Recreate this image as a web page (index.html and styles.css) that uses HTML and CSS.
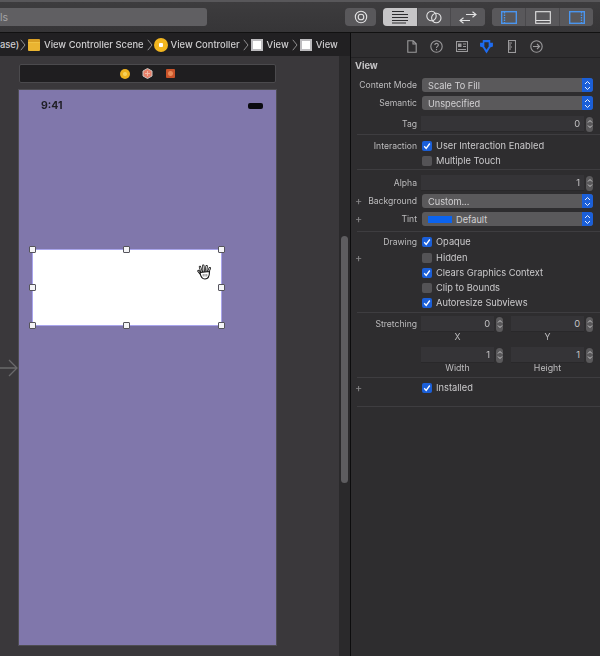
FILE: index.html
```html
<!DOCTYPE html>
<html lang="en">
<head>
<meta charset="utf-8">
<title>View inspector</title>
<link rel="stylesheet" href="styles.css">
</head>
<body>
<div class="app">
  <header class="toolbar">
    <div class="search"><span>ls</span></div>
    <div class="seg seg-one">
      <button class="seg-btn w31"><svg width="16" height="16" viewBox="0 0 16 16"><circle cx="8" cy="8" r="5.7" class="ic-w"/><circle cx="8" cy="8" r="2.8" class="ic-w"/></svg></button>
    </div>
    <div class="seg seg-two">
      <button class="seg-btn w35 on"><svg width="18" height="14" viewBox="0 0 18 14"><path d="M1 1.5h12M1 4.5h16M1 7.5h16M1 10.500h16M1 13h14" class="ic-d"/></svg></button>
      <button class="seg-btn w33"><svg width="16" height="14" viewBox="0 0 16 14"><circle cx="5.500" cy="6" r="4.700" class="ic-w"/><circle cx="10.300" cy="8" r="4.700" class="ic-w"/></svg></button>
      <button class="seg-btn w34"><svg width="18" height="13" viewBox="0 0 18 13"><path d="M7 3.500h10M13.500 .8l3.500 2.700-3.500 2.700M1 9.500h10M4.500 6.800L1 9.500l3.500 2.700" class="ic-w"/></svg></button>
    </div>
    <div class="seg seg-three">
      <button class="seg-btn w34"><svg width="16" height="13" viewBox="0 0 16 13"><rect x=".7" y=".7" width="14.600" height="11.600" class="ic-b"/><path d="M3.500 1v11" class="ic-b dash"/></svg></button>
      <button class="seg-btn w34"><svg width="16" height="13" viewBox="0 0 16 13"><rect x=".7" y=".7" width="14.600" height="11.600" class="ic-w"/><path d="M1 9.500h14" class="ic-w"/></svg></button>
      <button class="seg-btn w33"><svg width="16" height="13" viewBox="0 0 16 13"><rect x=".7" y=".7" width="14.600" height="11.600" class="ic-b"/><path d="M12.500 1v11" class="ic-b dash"/></svg></button>
    </div>
  </header>

  <div class="workspace">
    <section class="editor">
      <nav class="crumbs">
        <span class="crumb-cut">ase)</span>
        <svg class="chev" width="6" height="12" viewBox="0 0 6 12"><path d="M.8 .8L5 6 .8 11.200"/></svg>
        <span class="i-scene"></span>
        <span class="crumb">View Controller Scene</span>
        <svg class="chev" width="6" height="12" viewBox="0 0 6 12"><path d="M.8 .8L5 6 .8 11.200"/></svg>
        <span class="i-vc"></span>
        <span class="crumb c3">View Controller</span>
        <svg class="chev" width="6" height="12" viewBox="0 0 6 12"><path d="M.8 .8L5 6 .8 11.200"/></svg>
        <span class="i-view"></span>
        <span class="crumb">View</span>
        <svg class="chev" width="6" height="12" viewBox="0 0 6 12"><path d="M.8 .8L5 6 .8 11.200"/></svg>
        <span class="i-view"></span>
        <span class="crumb">View</span>
      </nav>
      <div class="stage">
        <div class="canvas">
          <svg class="entry" width="19" height="20" viewBox="0 0 19 20"><path d="M0 10h17M9 2l8 8-8 8"/></svg>
          <div class="dock">
            <span class="dk-vc"></span>
            <svg width="11" height="11" viewBox="0 0 11 11"><path d="M5.500 .5l4.500 2.500v5l-4.500 2.500L1 8V3z" fill="#e8806a" stroke="#c9c4c0"/><path d="M5.500 3v5M3 5.500h5" stroke="#f0b9a5"/></svg>
            <span class="dk-ex"></span>
          </div>
          <div class="phone">
            <div class="status"><span class="time">9:41</span><span class="batt"></span></div>
            <div class="subview">
              <i class="h tl"></i><i class="h tc"></i><i class="h tr"></i>
              <i class="h ml"></i><i class="h mr"></i>
              <i class="h bl"></i><i class="h bc"></i><i class="h br"></i>
              <svg class="hand" width="15" height="16" viewBox="0 0 15 16"><path d="M3.500 9.500L1.500 7M4.500 8L3 3M6.800 7.500L6.300 1.800M9 7.500l.6-5.200M11 8.500l1.800-4.300" class="hand-o"/><path d="M3.500 9.500L1.500 7M4.500 8L3 3M6.800 7.500L6.300 1.800M9 7.500l.6-5.200M11 8.500l1.800-4.300" class="hand-i"/><path d="M3 8.500C3.500 12 5 15 8 15s4.500-2.500 4.500-7.500z" fill="#fff" stroke="#111" stroke-width="1.100"/><path d="M6.200 10v2.500M8 10v2.500M9.800 10v2.500" stroke="#777" stroke-width=".9"/></svg>
            </div>
          </div>
        </div>
        <div class="track"><div class="thumb"></div></div>
      </div>
    </section>

    <aside class="inspector">
      <div class="tabs">
        <span class="tab"><svg width="10" height="13" viewBox="0 0 10 13"><path d="M.8 .8h5.400l3 3v8.400H.8zM6 1v3h3" class="ic-g"/></svg></span>
        <span class="tab"><svg width="13" height="13" viewBox="0 0 13 13"><circle cx="6.500" cy="6.500" r="5.700" class="ic-g"/><path d="M4.800 5c0-2.200 3.500-2.200 3.500-.1 0 1.500-1.800 1.500-1.800 3M6.500 9v1.200" class="ic-g"/></svg></span>
        <span class="tab"><svg width="12" height="11" viewBox="0 0 12 11"><rect x=".5" y=".5" width="11" height="10" class="ic-g"/><path d="M7 3h3M7 5.500h3M2 8.500h8" class="ic-g"/><rect x="2" y="2.500" width="3.500" height="3.500" fill="#9b9a9c"/></svg></span>
        <span class="tab"><svg width="15" height="15" viewBox="0 0 14 14"><path d="M3.500 1h7v2.500H13v3.500l-2.500 1-3.500 5.500-3.500-5.500L1 7V3.500h2.500z" fill="#1e6bf0"/><path d="M5 3h4v4l-2 3-2-3z" fill="#2e2d2f"/></svg></span>
        <span class="tab"><svg width="8" height="13" viewBox="0 0 8 13"><rect x=".5" y=".5" width="7" height="12" class="ic-g"/><path d="M1 3h3M1 5h2M1 7h3M1 9h2" class="ic-g"/></svg></span>
        <span class="tab"><svg width="13" height="13" viewBox="0 0 13 13"><circle cx="6.500" cy="6.500" r="5.700" class="ic-g"/><path d="M3 6.500h6.500M7 4l2.500 2.500L7 9" class="ic-g"/></svg></span>
      </div>

      <div class="sec s1">
        <h2 class="title">View</h2>
        <div class="row r18"><div class="lbl"><span>Content Mode</span></div><div class="popup"><span>Scale To Fill</span><b class="cap"><svg width="7" height="11" viewBox="0 0 7 11"><path d="M1 4l2.500-2.500L6 4M1 7l2.500 2.500L6 7"/></svg></b></div></div>
        <div class="row r18"><div class="lbl"><span>Semantic</span></div><div class="popup"><span>Unspecified</span><b class="cap"><svg width="7" height="11" viewBox="0 0 7 11"><path d="M1 4l2.500-2.500L6 4M1 7l2.500 2.500L6 7"/></svg></b></div></div>
        <div class="row r20"><div class="lbl"><span>Tag</span></div><div class="field full">0</div><div class="step"><svg width="6" height="10" viewBox="0 0 6 10"><path d="M1 3.500l2-2 2 2M1 6.500l2 2 2-2"/></svg></div></div>
      </div>

      <div class="sec s2">
        <div class="row r15"><div class="lbl"><span>Interaction</span></div><span class="cb on"><svg width="8" height="8" viewBox="0 0 8 8"><path d="M1.200 4.200l2 2.200L6.800 1.500"/></svg></span><span class="opt">User Interaction Enabled</span></div>
        <div class="row r15"><div class="lbl"></div><span class="cb"></span><span class="opt">Multiple Touch</span></div>
      </div>

      <div class="sec s3">
        <div class="row r18"><div class="lbl"><span>Alpha</span></div><div class="field full">1</div><div class="step"><svg width="6" height="10" viewBox="0 0 6 10"><path d="M1 3.500l2-2 2 2M1 6.500l2 2 2-2"/></svg></div></div>
        <div class="row r18"><div class="lbl"><span class="plus">+</span><span>Background</span></div><div class="popup"><span>Custom...</span><b class="cap"><svg width="7" height="11" viewBox="0 0 7 11"><path d="M1 4l2.500-2.500L6 4M1 7l2.500 2.500L6 7"/></svg></b></div></div>
        <div class="row r18"><div class="lbl"><span class="plus">+</span><span>Tint</span></div><div class="popup"><i class="swatch"></i><span>Default</span><b class="cap"><svg width="7" height="11" viewBox="0 0 7 11"><path d="M1 4l2.500-2.500L6 4M1 7l2.500 2.500L6 7"/></svg></b></div></div>
      </div>

      <div class="sec s4">
        <div class="row r15"><div class="lbl"><span>Drawing</span></div><span class="cb on"><svg width="8" height="8" viewBox="0 0 8 8"><path d="M1.200 4.200l2 2.200L6.800 1.500"/></svg></span><span class="opt">Opaque</span></div>
        <div class="row r15"><div class="lbl"><span class="plus">+</span></div><span class="cb"></span><span class="opt">Hidden</span></div>
        <div class="row r15"><div class="lbl"></div><span class="cb on"><svg width="8" height="8" viewBox="0 0 8 8"><path d="M1.200 4.200l2 2.200L6.800 1.500"/></svg></span><span class="opt">Clears Graphics Context</span></div>
        <div class="row r15"><div class="lbl"></div><span class="cb"></span><span class="opt">Clip to Bounds</span></div>
        <div class="row r15"><div class="lbl"></div><span class="cb on"><svg width="8" height="8" viewBox="0 0 8 8"><path d="M1.200 4.200l2 2.200L6.800 1.500"/></svg></span><span class="opt">Autoresize Subviews</span></div>
      </div>

      <div class="sec s5">
        <div class="row r16">
          <div class="lbl"><span>Stretching</span></div>
          <div class="field half">0</div><div class="step"><svg width="6" height="10" viewBox="0 0 6 10"><path d="M1 3.500l2-2 2 2M1 6.500l2 2 2-2"/></svg></div>
          <div class="field half gap">0</div><div class="step"><svg width="6" height="10" viewBox="0 0 6 10"><path d="M1 3.500l2-2 2 2M1 6.500l2 2 2-2"/></svg></div>
        </div>
        <div class="caps"><span>X</span><span>Y</span></div>
        <div class="row r16 mt5">
          <div class="lbl"></div>
          <div class="field half">1</div><div class="step"><svg width="6" height="10" viewBox="0 0 6 10"><path d="M1 3.500l2-2 2 2M1 6.500l2 2 2-2"/></svg></div>
          <div class="field half gap">1</div><div class="step"><svg width="6" height="10" viewBox="0 0 6 10"><path d="M1 3.500l2-2 2 2M1 6.500l2 2 2-2"/></svg></div>
        </div>
        <div class="caps"><span>Width</span><span>Height</span></div>
      </div>

      <div class="sec s6">
        <div class="row r15"><div class="lbl"><span class="plus">+</span></div><span class="cb on"><svg width="8" height="8" viewBox="0 0 8 8"><path d="M1.200 4.200l2 2.200L6.800 1.500"/></svg></span><span class="opt">Installed</span></div>
      </div>
    </aside>
  </div>
</div>
</body>
</html>
```

FILE: styles.css
```css
* { box-sizing: border-box; }
html, body { margin: 0; padding: 0; }
body { width: 600px; height: 656px; overflow: hidden; background: #2e2d2f; font-family: Inter, "Liberation Sans", sans-serif; font-size: 9.3px; color: #c4c3c5; }
.app { width: 600px; height: 656px; display: flex; flex-direction: column; filter: blur(.35px); }

/* toolbar */
.toolbar { height: 33px; flex: none; display: flex; align-items: center; padding: 0 7px 0 0; background: linear-gradient(#3d3c3e, #363537); border-top: 2px solid #58575a; border-bottom: 1px solid #111; }
.search { width: 207px; height: 18px; background: #605f62; border-radius: 0 3px 3px 0; display: flex; align-items: center; font-size: 10.5px; color: #a5a4a6; }
.seg { display: flex; height: 18px; border-radius: 4px; overflow: hidden; background: #59585b; }
.seg-one { margin-left: 138px; }
.seg-two { margin-left: 7px; }
.seg-three { margin-left: 7px; }
.seg-btn { border: 0; padding: 0; height: 18px; background: #59585b; display: flex; align-items: center; justify-content: center; border-right: 1px solid #4a494c; }
.seg-btn:last-child { border-right: 0; }
.seg-btn.on { background: #c6c5c7; }
.w31 { width: 31px; } .w33 { width: 33px; } .w34 { width: 34px; } .w35 { width: 35px; }
.ic-w { fill: none; stroke: #e2e2e3; stroke-width: 1.100; }
.ic-d { fill: none; stroke: #2c2c2e; stroke-width: 1.100; }
.ic-b { fill: none; stroke: #4a95ee; stroke-width: 1.400; }
.ic-g { fill: none; stroke: #9b9a9c; stroke-width: 1.100; }
.dash { stroke-dasharray: 1.500 1; }

/* workspace */
.workspace { flex: 1; display: flex; min-height: 0; }
.editor { width: 350px; flex: none; display: flex; flex-direction: column; }
.crumbs { height: 23px; flex: none; display: flex; align-items: center; background: #212022; font-size: 9.4px; font-weight: 500; color: #cfced0; white-space: nowrap; }
.crumb-cut { width: 17px; flex: none; }
.crumb { margin-left: 4px; }
.crumb.c3 { margin-left: 3px; }
.chev { flex: none; margin: 0 2px 0 3px; fill: none; stroke: #8e8d8f; stroke-width: 1; }
.i-scene { width: 12px; height: 12px; flex: none; background: linear-gradient(#d99f25 0 3px, #f0c243 3px 4px, #eab431 4px); border-radius: 1px; }
.i-vc { width: 14px; height: 14px; flex: none; border-radius: 50%; margin-left: -1px; background: radial-gradient(circle, #fff 0 2px, #f2b61f 2.500px); }
.i-view { width: 12px; height: 12px; flex: none; background: #fff; border: 2px solid #bdbcbf; }

.stage { flex: 1; display: flex; min-height: 0; background: #3a383b; }
.canvas { width: 339px; flex: none; position: relative; padding: 8px 0 0 19px; background: #3a383b; }
.entry { position: absolute; left: 0; top: 302px; fill: none; stroke: #6a696b; stroke-width: 1.300; }
.dock { width: 257px; height: 19px; border: 1px solid #4b4a4d; border-radius: 2px; background: #1f1e20; display: flex; align-items: center; justify-content: center; gap: 12px; }
.dk-vc { width: 10px; height: 10px; border-radius: 50%; background: radial-gradient(circle, #f8d25a 0 1.500px, #efb21f 2.500px); }
.dk-ex { width: 9px; height: 9px; border-radius: 1px; background: radial-gradient(circle, #e98a58 0 2px, #c9532a 3px); margin-left: 1px; }
.phone { width: 257px; height: 555px; margin-top: 7px; background: #8077ab; position: relative; box-shadow: 0 0 0 1px #4e4d52; }
.status { display: flex; align-items: center; justify-content: space-between; padding: 9px 13px 0 22px; }
.time { font-size: 10.5px; font-weight: 700; color: #1f1e26; line-height: 13px; }
.batt { width: 15px; height: 6px; border-radius: 2px; background: #0b0b10; }
.subview { position: absolute; left: 13px; top: 159px; width: 190px; height: 77px; background: #fff; border: 1px solid #a9a5ec; }
.h { position: absolute; width: 7px; height: 7px; background: #f4f4f6; border: 1px solid #55545c; border-radius: 1px; }
.tl, .tc, .tr { top: -4px; } .ml, .mr { top: 34px; } .bl, .bc, .br { bottom: -4px; }
.tl, .ml, .bl { left: -4px; } .tc, .bc { left: 90px; } .tr, .mr, .br { right: -4px; }
.hand { position: absolute; left: 164px; top: 14px; }
.hand-o { fill: none; stroke: #111; stroke-width: 2.400; stroke-linecap: round; }
.hand-i { fill: none; stroke: #fff; stroke-width: .8; stroke-linecap: round; }
.track { width: 11px; flex: none; background: #2a292b; padding: 180px 2px 0; }
.thumb { height: 247px; background: #5e5d60; border-radius: 4px; }

/* inspector */
.inspector { flex: 1; border-left: 1px solid #0c0c0d; background: #2e2d2f; }
.tabs { height: 25px; display: flex; align-items: center; padding: 2px 0 0 48px; border-bottom: 1px solid #232224; }
.tab { width: 25px; display: flex; justify-content: center; align-items: center; }
.title { margin: 0 0 3px -6px; height: 15px; line-height: 15px; padding-left: 4px; font-size: 9.3px; font-weight: 700; color: #c6c5c7; }
.sec { border-bottom: 1px solid #3e3d40; margin: 0 6px; }
.sec .row { margin-left: -6px; }
.s1 .r20 { margin-top: 2px; }
.s2 { padding: 3px 0 1px; }
.s3 { padding: 4px 0 3px; }
.s4 { padding: 2px 0 2px; }
.s4 .row:nth-child(2) { margin-top: 1px; }
.s5 { padding: 3px 0 4px; }
.s6 { padding: 2px 0 11px; }
.row { display: flex; align-items: center; }
.r15 { height: 15px; } .r16 { height: 16px; } .r18 { height: 18px; } .r20 { height: 20px; }
.mt5 { margin-top: 5px; }
.lbl { width: 66px; flex: none; padding-left: 4px; display: flex; align-items: center; justify-content: flex-end; margin-right: 5px; color: #bdbcbe; white-space: nowrap; font-size: 8.6px; }
.plus { margin-right: auto; font-size: 11px; color: #8a898b; line-height: 10px; }
.popup { width: 171px; height: 13.5px; background: #5a595b; border-radius: 3px; display: flex; align-items: center; padding-left: 6px; position: relative; color: #d2d1d3; overflow: hidden; font-size: 9.2px; }
.cap { position: absolute; right: 0; top: 0; bottom: 0; width: 11px; background: #1b5fd8; display: flex; align-items: center; justify-content: center; }
.cap svg { fill: none; stroke: #e8effc; stroke-width: 1; }
.swatch { width: 24px; height: 7px; background: #0b63ee; margin-right: 4px; }
.field { height: 16px; background: #353437; border-bottom: 1px solid #29282a; text-align: right; line-height: 15px; color: #c4c3c5; padding-right: 4px; margin-left: -1px; }
.field.full { width: 163px; }
.field.half { width: 73px; }
.field.gap { margin-left: 8px; }
.step { width: 7px; height: 15px; margin-left: 2px; border-radius: 3.5px; background: #5a595b; display: flex; align-items: center; justify-content: center; flex: none; }
.step svg { fill: none; stroke: #d5d5d6; stroke-width: .9; }
.cb { width: 10px; height: 10px; border-radius: 2px; background: #545356; display: flex; align-items: center; justify-content: center; flex: none; }
.cb.on { background: #1b5fd8; }
.cb svg { fill: none; stroke: #fff; stroke-width: 1.300; }
.opt { margin-left: 4px; color: #cbcacc; white-space: nowrap; }
.caps { height: 10px; display: flex; margin-left: 64px; line-height: 10px; color: #bdbcbe; font-size: 8.8px; }
.caps span { width: 90px; text-align: center; padding-right: 17px; }
```
